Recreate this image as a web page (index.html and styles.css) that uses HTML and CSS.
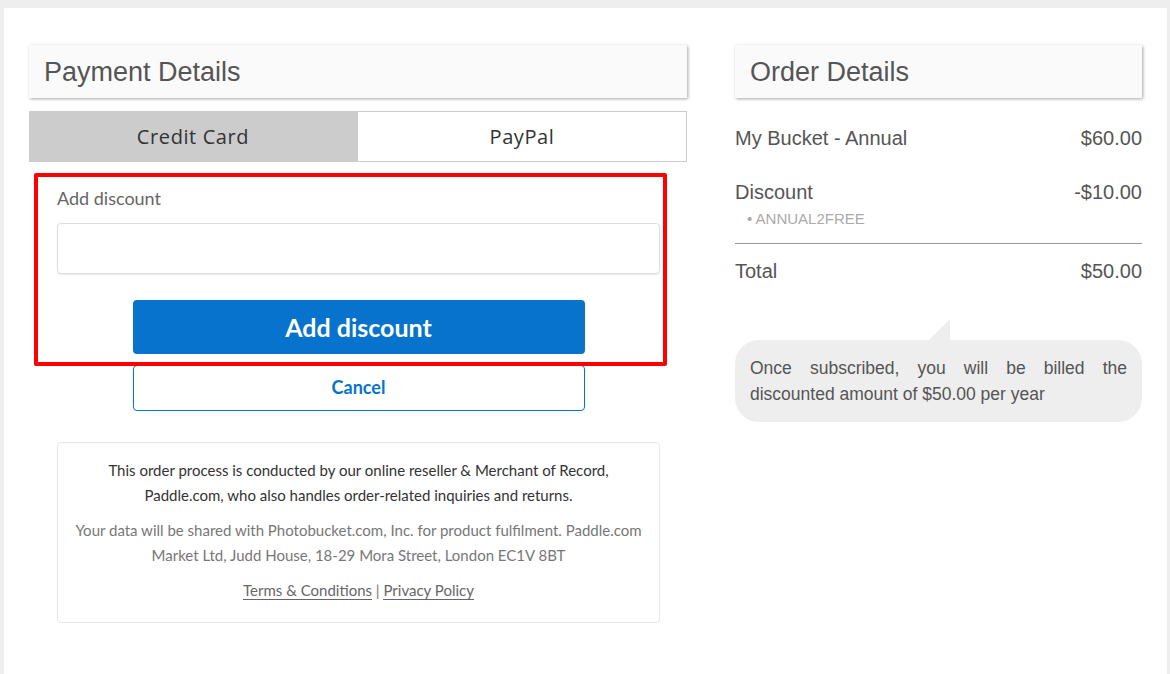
FILE: index.html
```html
<!DOCTYPE html>
<html lang="en">
  <head>
    <meta charset="UTF-8" />
    <meta name="viewport" content="width=device-width, initial-scale=1.0" />
    <title>Checkout</title>
    <link rel="stylesheet" href="styles.css">
  </head>

  <body>
    <div class="page">
      <!-- Left column: payment -->
      <div class="payment">
        <h2 class="panelTitle">Payment Details</h2>

        <div class="tabs">
          <div class="tab active">Credit Card</div>
          <div class="tab">PayPal</div>
        </div>

        <form class="discountForm">
          <!-- red highlight drawn over the discount block -->
          <div class="highlight"></div>
          <label for="discount">Add discount</label>
          <input type="text" id="discount" name="discount" />
          <button type="button" class="addBtn">Add discount</button>
          <button type="button" class="cancelBtn">Cancel</button>
        </form>

        <div class="legal">
          <p class="dark">This order process is conducted by our online reseller &amp; Merchant of Record, Paddle.com, who also handles order-related inquiries and returns.</p>
          <p>Your data will be shared with Photobucket.com, Inc. for product fulfilment. Paddle.com Market Ltd, Judd House, 18-29 Mora Street, London EC1V 8BT</p>
          <p class="links"><a href="#">Terms &amp; Conditions</a> | <a href="#">Privacy Policy</a></p>
        </div>
      </div>

      <!-- Right column: order summary -->
      <div class="order">
        <h2 class="panelTitle">Order Details</h2>

        <div class="line first">
          <span>My Bucket - Annual</span>
          <span>$60.00</span>
        </div>
        <div class="line">
          <span>Discount</span>
          <span>-$10.00</span>
        </div>
        <div class="coupon">&bull; ANNUAL2FREE</div>
        <div class="line total">
          <span>Total</span>
          <span>$50.00</span>
        </div>

        <div class="bubble">
          Once subscribed, you will be billed the discounted amount of $50.00 per year
        </div>
      </div>
    </div>
  </body>
</html>
```

FILE: styles.css
```css
* {
  margin: 0;
  padding: 0;
  box-sizing: border-box;
}

body {
  background-color: #eeeeee;
  padding: 8px 3px 0 4px;
  height: 674px;
  overflow: hidden;
  font-family: "Liberation Sans", Arial, sans-serif;
}

.page {
  background-color: white;
  height: 666px;
  padding: 37px 25px 0 25px;
  display: flex;
  gap: 48px;
}

.payment {
  width: 658px;
}

.order {
  width: 407px;
}

.panelTitle {
  height: 53px;
  background-color: #fafafa;
  box-shadow: 1px 1px 3px rgba(0, 0, 0, 0.35);
  font-size: 27px;
  font-weight: normal;
  color: #555;
  padding: 12px 16px 0 15px;
}

.tabs {
  display: flex;
  margin-top: 13px;
  height: 51px;
}

.tab {
  flex: 1;
  display: flex;
  justify-content: center;
  align-items: center;
  font-family: "Open Sans", sans-serif;
  font-size: 20px;
  letter-spacing: 0.6px;
  color: #333;
  border: 1px solid #cccccc;
  background-color: white;
}

.tab.active {
  background-color: #cccccc;
  flex: 0 0 328px;
}

.discountForm {
  position: relative;
  display: flex;
  flex-direction: column;
  align-items: center;
  padding: 25px 27px 0 28px;
  font-family: Lato, sans-serif;
}

.highlight {
  position: absolute;
  left: 5px;
  top: 11px;
  width: 633px;
  height: 193px;
  border: 4px solid #ff0000;
  border-radius: 2px;
  pointer-events: none;
  z-index: 2;
}

.discountForm label {
  align-self: flex-start;
  font-size: 18px;
  color: #666;
  line-height: 22px;
}

.discountForm input {
  width: 100%;
  height: 51px;
  margin-top: 14px;
  border: 1px solid #dddddd;
  border-radius: 4px;
  box-shadow: 0 1px 2px rgba(0, 0, 0, 0.08);
  outline: none;
}

.addBtn,
.cancelBtn {
  width: 452px;
  font-family: Lato, sans-serif;
  font-weight: bold;
  border-radius: 4px;
  cursor: pointer;
}

.addBtn {
  height: 54px;
  margin-top: 26px;
  background-color: #0773cd;
  border: none;
  color: white;
  font-size: 25px;
}

.cancelBtn {
  height: 46px;
  margin-top: 11px;
  background-color: white;
  border: 1px solid #0773cd;
  color: #0773cd;
  font-size: 18px;
  padding-bottom: 3px;
}

.legal {
  margin: 31px 27px 0 28px;
  border: 1px solid #e8e8e8;
  border-radius: 4px;
  padding: 15px 10px 19px 10px;
  text-align: center;
  font-family: Lato, sans-serif;
  font-size: 15px;
  line-height: 25px;
  color: #777;
}

.legal p + p {
  margin-top: 10px;
}

.legal .dark {
  color: #333;
}

.legal a {
  color: #666;
  text-decoration: none;
  border-bottom: 1px solid #666;
}

.line {
  display: flex;
  justify-content: space-between;
  font-size: 20px;
  color: #555;
  line-height: 24px;
  margin-top: 30px;
}

.line.first {
  margin-top: 28px;
}

.coupon {
  font-size: 15px;
  color: #aaa;
  padding-left: 12px;
  margin-top: 6px;
  padding-bottom: 16px;
  border-bottom: 1px solid #999;
}

.line.total {
  margin-top: 15px;
}

.bubble {
  position: relative;
  margin-top: 57px;
  background-color: #eeeeee;
  border-radius: 24px;
  padding: 15px 15px 15px 15px;
  font-size: 17.5px;
  line-height: 26px;
  color: #555;
  text-align: justify;
}

.bubble::before {
  content: "";
  position: absolute;
  left: 194px;
  top: -21px;
  border-left: 21px solid transparent;
  border-bottom: 21px solid #eeeeee;
}
```
